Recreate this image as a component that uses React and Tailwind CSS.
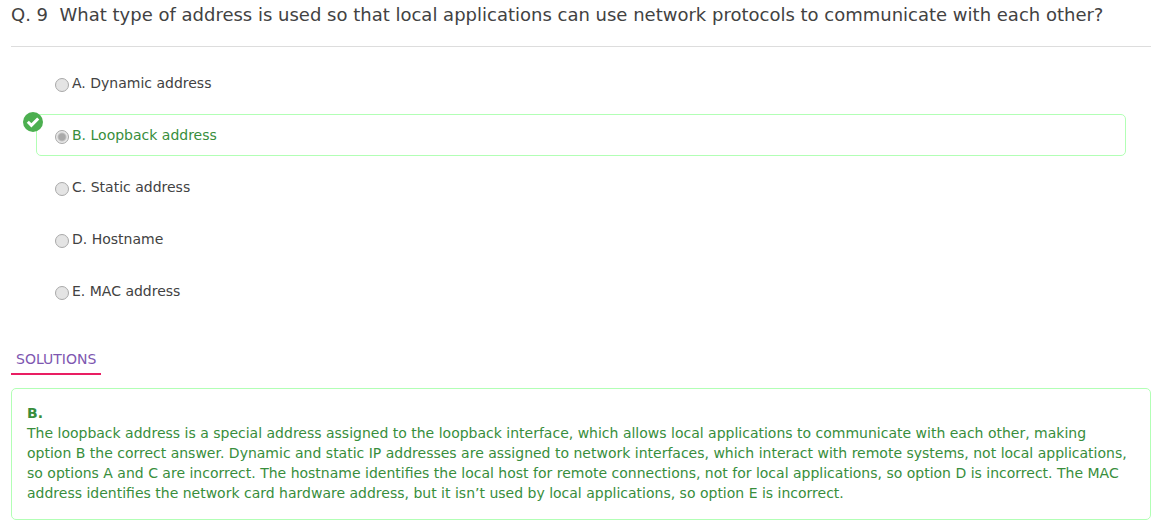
const options = [
  { id: "A", text: "Dynamic address" },
  { id: "B", text: "Loopback address", correct: true },
  { id: "C", text: "Static address" },
  { id: "D", text: "Hostname" },
  { id: "E", text: "MAC address" },
];

function CheckBadge() {
  return (
    <svg viewBox="0 0 20 20" className="absolute -top-[3px] -left-[14px] size-5" aria-hidden="true">
      <circle cx="10" cy="10" r="10" fill="#4caf50" />
      <path d="M4.8 9.7l3.6 3.6 6.8-6.8" fill="none" stroke="#fff" strokeWidth="3" />
    </svg>
  );
}

function Option({ option }) {
  return (
    <label
      className={`relative flex h-[42px] items-center rounded-[5px] border pl-[18px] text-sm ${
        option.correct ? "border-[#b2ffb5] text-[#388e3c]" : "border-transparent text-[#424242]"
      }`}
    >
      {option.correct && <CheckBadge />}
      <input
        type="radio"
        name="answer"
        defaultChecked={option.correct}
        className="mt-1 mr-[3px] size-[14px] appearance-none rounded-full border border-[#a9a9a9] bg-[#e4e4e4] checked:bg-[radial-gradient(circle,#a9a9a9_0,#a9a9a9_3px,#c2c2c2_4px,#e8e8e8_5px)]"
      />
      <span>
        {option.id}. {option.text}
      </span>
    </label>
  );
}

export default function App() {
  return (
    <main className="bg-white pt-[3px] pr-4 pb-2.5 pl-[11px] font-['DejaVu_Sans',sans-serif]">
      <h1 className="border-b border-[#dddddd] pb-[19px] text-lg leading-6 text-[#424242]">
        Q. 9 &nbsp;What type of address is used so that local applications can use network protocols to communicate with each other?
      </h1>
      <div className="mt-[15px] mr-[25px] ml-[25px] flex flex-col gap-2.5">
        {options.map((option) => (
          <Option key={option.id} option={option} />
        ))}
      </div>
      <h2 className="mt-[37px] w-fit border-b-2 border-[#e91e63] px-[5px] pb-1 text-sm leading-5 text-[#7e57b0]">
        SOLUTIONS
      </h2>
      <section className="mt-[13px] rounded-[5px] border border-[#b2ffb5] pt-3.5 pr-4 pb-4 pl-[15px] text-sm leading-5 text-[#388e3c]">
        <strong className="block">B.</strong>
        <p>
          The loopback address is a special address assigned to the loopback interface, which allows local applications to communicate with each other, making option B the correct answer. Dynamic and static IP addresses are assigned to network interfaces, which interact with remote systems, not local applications, so options A and C are incorrect. The hostname identifies the local host for remote connections, not for local applications, so option D is incorrect. The MAC address identifies the network card hardware address, but it isn’t used by local applications, so option E is incorrect.
        </p>
      </section>
    </main>
  );
}
